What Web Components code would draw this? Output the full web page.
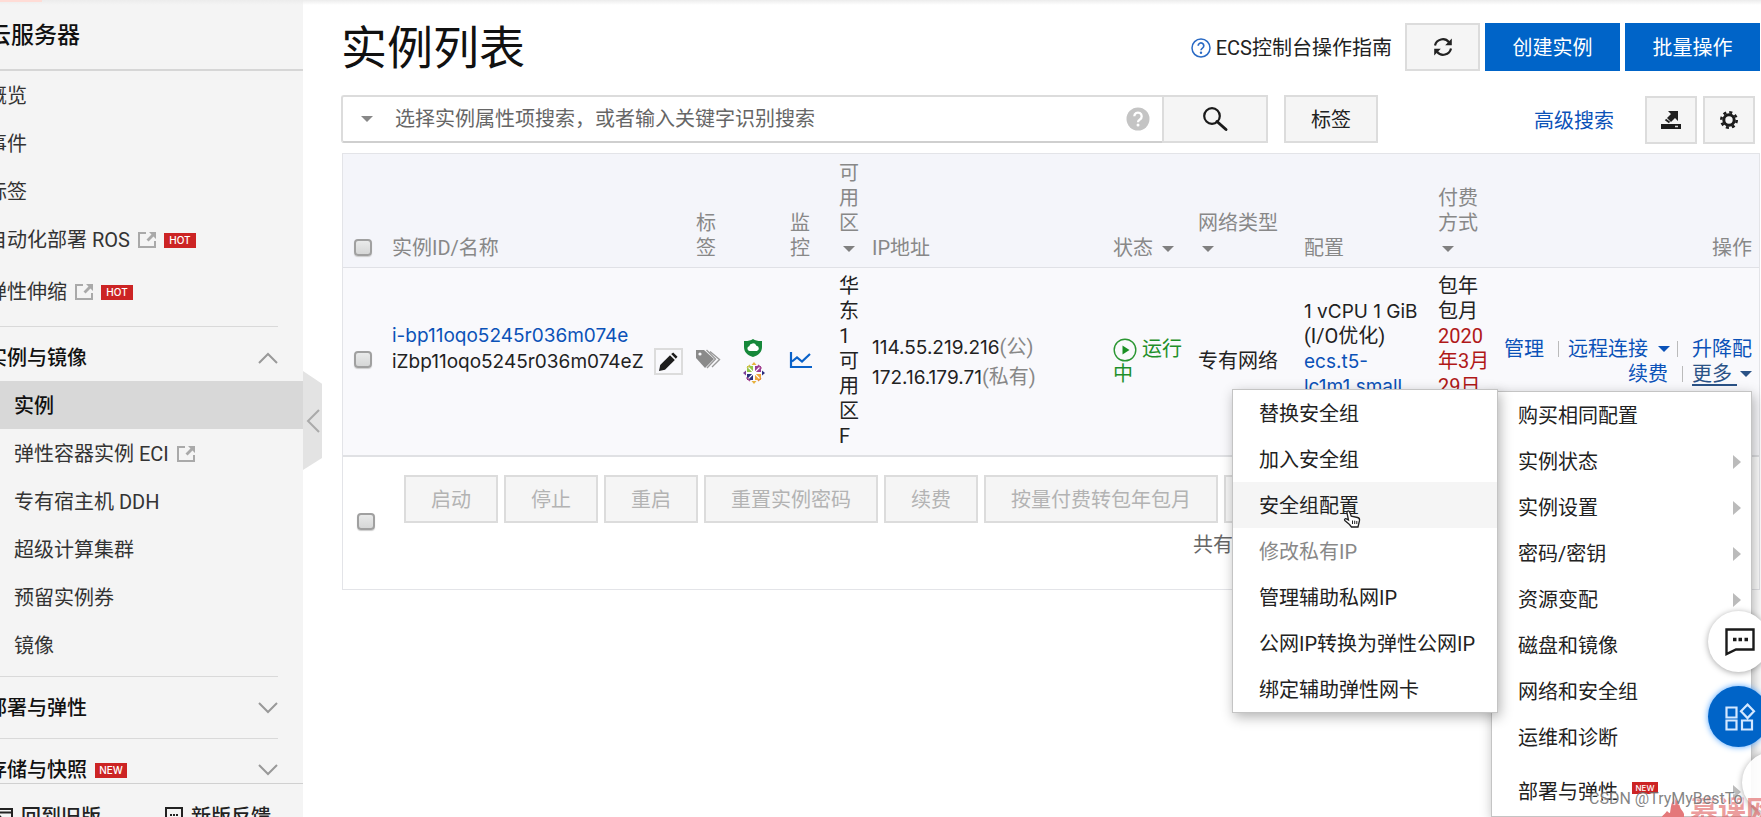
<!DOCTYPE html>
<html lang="zh-CN">
<head>
<meta charset="utf-8">
<title>实例列表</title>
<style>
  html, body { margin: 0; height: 100%; overflow: hidden; background: #fff; }
  body { font: 20px/25px Roboto, "Noto Sans CJK SC", sans-serif; color: #222; }
</style>
</head>
<body>
<ecs-app></ecs-app>

<script>
const define = (name, html, setup) => {
  const tpl = document.createElement('template');
  tpl.innerHTML = html;
  customElements.define(name, class extends HTMLElement {
    constructor() {
      super();
      this.attachShadow({ mode: 'open' }).append(tpl.content.cloneNode(true));
    }
    connectedCallback() { if (setup) setup(this, this.shadowRoot); }
  });
};

/* name: [width, height, markup] */
const ICONS = {
  external: [18, 16, '<path d="M8 1H1v14h16V9" fill="none" stroke="#a9a9a9" stroke-width="2"/><path d="M11 0h7v7l-2.500-2.500-5 5-2-2 5-5z" fill="#a9a9a9"/>'],
  up: [20, 12, '<path d="M1 11 10 2l9 9" fill="none" stroke="#999" stroke-width="2"/>'],
  down: [20, 12, '<path d="M1 1l9 9 9-9" fill="none" stroke="#999" stroke-width="2"/>'],
  left: [14, 24, '<path d="M13 1 2 12l11 11" fill="none" stroke="#aaa" stroke-width="2"/>'],
  caret: [12, 6, '<path d="M0 0h12L6 6z" fill="currentColor"/>'],
  right: [8, 14, '<path d="M0 0l8 7-8 7z" fill="#bbb"/>'],
  help: [20, 20, '<circle cx="10" cy="10" r="9" fill="none" stroke="#2a6ac4" stroke-width="1.500"/><path d="M7.200 7.800a2.800 2.800 0 1 1 4.300 2.300c-1 .7-1.500 1.100-1.500 2.200" fill="none" stroke="#2a6ac4" stroke-width="1.700"/><circle cx="10" cy="14.700" r="1.200" fill="#2a6ac4"/>'],
  helpFill: [24, 24, '<circle cx="12" cy="12" r="11.500" fill="#c4c4c4"/><path d="M8.300 9.300a3.700 3.700 0 1 1 5.600 3.200c-1.300.8-1.900 1.300-1.900 2.700" fill="none" stroke="#fff" stroke-width="2.300"/><circle cx="12" cy="18" r="1.500" fill="#fff"/>'],
  refresh: [20, 20, '<path d="M2 8.500A8 8 0 0 1 16 5.200M18 11.500A8 8 0 0 1 4 14.800" fill="none" stroke="#222" stroke-width="2.200"/><path d="M18.800 1.500v6.700h-6.600zM1.200 18.500v-6.700h6.600z" fill="#222"/>'],
  search: [26, 24, '<circle cx="10" cy="9" r="7.800" fill="none" stroke="#1a1a1a" stroke-width="2.200"/><path d="M15 14.500l9 8" stroke="#1a1a1a" stroke-width="3" stroke-linecap="round"/>'],
  export: [20, 20, '<path d="M0 14h20v5H0z" fill="#1c1c1c"/><path d="M14 16.500h3" stroke="#ddd" stroke-width="1.500"/><path d="M7 1h10v10l-3-3-4 4-4-4 4-4z" fill="#222"/><path d="M4.500 9.500l4 3" stroke="#222" stroke-width="2"/>'],
  gear: [18, 18, '<circle cx="9" cy="9" r="5.200" fill="none" stroke="#1c1c1c" stroke-width="3"/><circle cx="9" cy="9" r="7.700" fill="none" stroke="#1c1c1c" stroke-width="2.600" stroke-dasharray="3.050 3"/>'],
  pencil: [20, 20, '<path d="M1 19l1.200-6L12 3.200l4.800 4.800L7 17.800z" fill="#1d1d1d"/><path d="M13.200 2l2-1.500 4.300 4.300-1.700 2z" fill="#1d1d1d"/>'],
  tags: [26, 20, '<path d="M0 1h8l10 9-9 9-9-10z" fill="#8a8a8a"/><circle cx="4" cy="5" r="1.600" fill="#f9f9fc"/><path d="M10.500 1l9 9-8.500 9M14 2.500l9.500 8-7.500 7.500" fill="none" stroke="#999" stroke-width="1.400"/>'],
  shield: [20, 18, '<path d="M10 0c2.500 1.600 5.500 2.200 9 2v6c0 5-3.500 8.500-9 10-5.500-1.500-9-5-9-10V2c3.500.2 6.500-.4 9-2z" fill="#16883a"/><path d="M6.500 12a2.400 2.400 0 0 1-.3-4.700 3.800 3.800 0 0 1 7.200-.6 2.700 2.700 0 0 1 .4 5.300z" fill="#fff"/>'],
  flower: [22, 22, '<path d="M4 4h6v6H4z" fill="#8fc54a"/><path d="M12 4h6v6h-6z" fill="#9a3c96"/><path d="M4 12h6v6H4z" fill="#2b2e7d"/><path d="M12 12h6v6h-6z" fill="#f0a63c"/><path d="M11 0l2.500 3h-5zM11 22l2.500-3h-5z" fill="#e8b23f"/><path d="M0 11l3-2.500v5z" fill="#7b3f98"/><path d="M22 11l-3-2.500v5z" fill="#2b2e7d"/><path d="M4 6l3-3" stroke="#d9c04a" stroke-width="1.500"/><path d="M15 3l3.500 3.500M3.500 15.500L7 19" stroke="#a8458f" stroke-width="1.500"/><path d="M15 19l3-3" stroke="#e0883f" stroke-width="1.500"/><path d="M5.500 5.500l11 11M16.500 5.500l-11 11M11 3v16M3 11h16" stroke="#fff" stroke-width="1.100"/>'],
  chart: [22, 16, '<path d="M1 0v15h21" fill="none" stroke="#0a62c9" stroke-width="2.200"/><path d="M2 9.500l5-4 5 4 8-7.500" fill="none" stroke="#0a62c9" stroke-width="2.200"/>'],
  play: [24, 24, '<circle cx="12" cy="12" r="10.800" fill="none" stroke="#2a9632" stroke-width="1.400"/><path d="M9.500 7.500l7 4.500-7 4.500z" fill="#1a8f24"/>'],
  chat: [30, 28, '<path d="M1.500 1.500h27v20H11l-9.500 4.500z" fill="none" stroke="#1a1a1a" stroke-width="2.400"/><path d="M8 11.500h3.500M13.500 11.500H17M19.500 11.500H23" stroke="#1a1a1a" stroke-width="3.600"/>'],
  apps: [30, 28, '<g fill="none" stroke="#d4e8ff" stroke-width="2.200"><path d="M1.500 4.500h10v10h-10zM1.500 17.500h10v9h-10zM17 17.500h10v9H17zM22.500 1.500l6.500 6.800-6.500 6.800L16 8.300z"/></g>'],
  back: [20, 18, '<path d="M1 1h18v16H1z" fill="none" stroke="#222" stroke-width="2"/><path d="M1 4.500h18M5 11h9M8 8l-3.500 3L8 14" fill="none" stroke="#222" stroke-width="1.800"/>'],
  feedback: [18, 20, '<path d="M1 1h16v14H6l-5 4z" fill="none" stroke="#222" stroke-width="2"/><path d="M5 8h2M8 8h2M11 8h2" stroke="#222" stroke-width="2"/>'],
  hand: [18, 18, '<path d="M4.500 1.200c1-.6 1.800 0 2.200 1l1.600 4 6.200 1.300c1.800.5 2.300 1.500 2 3l-.8 3.500-.7 3H8.500l-2-2.500-4.700-4c-.8-1 .2-2.300 1.600-1.600L5.500 10 4 3c-.2-.8 0-1.400.5-1.800z" fill="#fff" stroke="#222" stroke-width="1.300"/><path d="M9.500 10.500v3.500M11.700 10.700v3.300M13.800 11v3" stroke="#222"/>'],
  flame: [24, 28, '<path d="M13 0c1 6 6 7 7 13 1 3 3 4 4 7v8H0c0-5 4-7 7-11 2 2 3 2 3 2 1-6 1-9 3-12z" fill="#e4787a"/>']
};
define('ui-icon', `
<style>
  :host { display: inline-flex; flex: none; }
  svg { display: block; overflow: visible; }
</style>
<svg aria-hidden="true"></svg>`, (host, root) => {
  const [w, h, body] = ICONS[host.getAttribute('name')];
  const svg = root.querySelector('svg');
  svg.setAttribute('width', w);
  svg.setAttribute('height', h);
  svg.setAttribute('viewBox', `0 0 ${w} ${h}`);
  svg.innerHTML = body;
});

define('ui-badge', `
<style>
  :host { display: inline-flex; align-items: center; justify-content: center; flex: none;
    width: 32px; height: 15px; background: #cc2424; color: #fff; font: 500 10px/15px Inter, sans-serif; }
  :host([small]) { width: 26px; height: 12px; font-size: 8px; line-height: 12px; align-self: flex-start; margin-top: 12px; }
</style><slot></slot>`);

define('ui-button', `
<style>
  :host { display: inline-flex; flex: none; }
  button { height: 48px; padding: 2px 25px 0; box-sizing: border-box; border: 2px solid #dcdcdc; background: #f5f5f5;
    color: #222; font: inherit; display: inline-flex; align-items: center; justify-content: center; white-space: nowrap; }
  button:disabled { color: #b3b3b3; }
  :host([kind=primary]) button { background: #0064c8; border-color: #0064c8; color: #fff; width: 135px; }
  :host([size=wide]) button { width: 106px; padding: 0; }
  :host([size=refresh]) button { width: 75px; padding: 0; }
  :host([size=square]) button { width: 52px; padding: 0; }
  :host([size=tiny]) button { width: 29px; height: 27px; padding: 0; background: none; }
</style>
<button type="button"><slot></slot></button>`, (host, root) => {
  const b = root.querySelector('button');
  b.disabled = host.hasAttribute('disabled');
  if (host.hasAttribute('label')) b.setAttribute('aria-label', host.getAttribute('label'));
});

define('ui-check', `
<style>
  :host { display: inline-flex; }
  input { appearance: none; margin: 0; width: 18px; height: 17px; border: 2px solid #a0a0a0; border-radius: 4px;
    background: linear-gradient(#e9eaea, #d6d7d7); box-shadow: 0 1px 1px #ccc; }
</style>
<input type="checkbox">`, (host, root) =>
  root.querySelector('input').setAttribute('aria-label', host.getAttribute('label')));

/* ---- sidebar ---- */
define('side-item', `
<style>
  :host { display: block; }
  a { display: flex; align-items: center; gap: 8px; height: 48px; padding-top: 2px; box-sizing: border-box;
    color: #333; text-decoration: none; white-space: nowrap; }
  :host([sub]) a { padding-left: 27px; }
  :host([current]) a { background: #d8d8d8; color: #111; font-weight: 500; }
</style>
<a href="#"><slot></slot></a>`);

define('side-group', `
<style>
  :host { display: block; }
  .rule { height: 1px; background: #d9d9d9; margin: 7px 25px 6px 0; }
  button { display: flex; align-items: center; gap: 8px; width: 100%; height: 48px; padding: 2px 25px 0 0; border: 0;
    background: none; font: inherit; font-weight: 500; color: #111; white-space: nowrap; }
  ui-icon { margin-left: auto; }
  :host([open]) .down, :host(:not([open])) .up { display: none; }
</style>
<div class="rule"></div>
<button type="button"><slot name="title"></slot><ui-icon class="up" name="up"></ui-icon><ui-icon class="down" name="down"></ui-icon></button>
<slot></slot>`);

define('ecs-sidebar', `
<style>
  :host { position: relative; flex: none; width: 303px; height: 100vh; display: block; z-index: 1; }
  .panel { height: 100%; display: flex; flex-direction: column; background: #f4f4f4; overflow: hidden; }
  h2 { flex: none; margin: 0; box-sizing: border-box; height: 71px; border-bottom: 2px solid #d6d6d6;
    font-size: 23px; font-weight: 500; line-height: 72px; color: #111; }
  h2 span { margin-left: -12px; }
  nav { flex: 1; min-height: 0; overflow: hidden; margin-left: -13px; }
  .last { margin: 4px 0 11px; }
  footer { flex: none; height: 33px; overflow: hidden; border-top: 1px solid #d0d0d0; display: flex; margin-left: -7px; }
  footer a { display: flex; align-items: center; gap: 8px; height: 28px; padding-top: 19px; flex: none; width: 172px;
    color: #222; text-decoration: none; font-weight: 500; white-space: nowrap; }
  .fold { position: absolute; left: 100%; top: 371px; width: 19px; height: 99px; padding: 0; border: 0; background: #e3e3e3;
    clip-path: polygon(0 0, 100% 13%, 100% 88%, 0 100%); display: flex; align-items: center; justify-content: center; }
</style>
<div class="panel">
  <h2><span>云服务器</span></h2>
  <nav>
    <side-item>概览</side-item>
    <side-item>事件</side-item>
    <side-item>标签</side-item>
    <side-item>自动化部署 ROS<ui-icon name="external"></ui-icon><ui-badge>HOT</ui-badge></side-item>
    <side-item class="last">弹性伸缩<ui-icon name="external"></ui-icon><ui-badge>HOT</ui-badge></side-item>
    <side-group open>
      <span slot="title">实例与镜像</span>
      <side-item sub current>实例</side-item>
      <side-item sub>弹性容器实例 ECI<ui-icon name="external"></ui-icon></side-item>
      <side-item sub>专有宿主机 DDH</side-item>
      <side-item sub>超级计算集群</side-item>
      <side-item sub>预留实例券</side-item>
      <side-item sub>镜像</side-item>
    </side-group>
    <side-group><span slot="title">部署与弹性</span></side-group>
    <side-group><span slot="title">存储与快照</span><ui-badge slot="title">NEW</ui-badge></side-group>
  </nav>
  <footer>
    <a href="#"><ui-icon name="back"></ui-icon>回到旧版</a>
    <a href="#"><ui-icon name="feedback"></ui-icon>新版反馈</a>
  </footer>
</div>
<button class="fold" type="button" aria-label="收起"><ui-icon name="left"></ui-icon></button>`);

/* ---- page header and search ---- */
define('page-header', `
<style>
  :host { display: flex; align-items: center; gap: 5px; height: 48px; }
  h1 { margin: 0 auto 0 0; padding-top: 2px; font-size: 46px; line-height: 48px; font-weight: 400; color: #111; }
  a { display: flex; align-items: center; gap: 5px; padding-top: 2px; color: #222; text-decoration: none; margin-right: 8px; white-space: nowrap; }
</style>
<h1>实例列表</h1>
<a href="#"><ui-icon name="help"></ui-icon>ECS控制台操作指南</a>
<ui-button size="refresh" label="刷新"><ui-icon name="refresh"></ui-icon></ui-button>
<ui-button kind="primary">创建实例</ui-button>
<ui-button kind="primary">批量操作</ui-button>`);

define('search-bar', `
<style>
  :host { display: flex; align-items: center; height: 48px; padding-right: 5px; }
  .box { flex: 0 1 821px; min-width: 0; box-sizing: border-box; height: 48px; display: flex; align-items: center; gap: 22px; padding: 0 12px 0 18px;
    border: 2px solid #dcdcdc; border-bottom-color: #cfcfcf; border-right: 0; border-radius: 3px 0 0 3px; color: #888; }
  input { flex: 1; min-width: 0; border: 0; padding: 0; background: none; outline: 0; font: inherit; color: #222; }
  input::placeholder { color: #666; opacity: 1; }
  .tag { margin-left: 16px; }
  a { margin: 0 31px 0 auto; padding-top: 4px; color: #0b52b8; text-decoration: none; white-space: nowrap; }
  .tools { display: flex; gap: 6px; padding-top: 2px; }
</style>
<div class="box">
  <ui-icon name="caret"></ui-icon>
  <input type="text" aria-label="搜索实例" placeholder="选择实例属性项搜索，或者输入关键字识别搜索">
  <ui-icon name="helpFill"></ui-icon>
</div>
<ui-button size="wide" label="搜索"><ui-icon name="search"></ui-icon></ui-button>
<ui-button class="tag">标签</ui-button>
<a href="#">高级搜索</a>
<div class="tools">
  <ui-button size="square" label="导出"><ui-icon name="export"></ui-icon></ui-button>
  <ui-button size="square" label="设置"><ui-icon name="gear"></ui-icon></ui-button>
</div>`);

/* ---- instance table ---- */
define('instance-table', `
<style>
  :host { display: block; border: 1px solid #e3e4e8; }
  table { width: 100%; border-collapse: collapse; table-layout: fixed; }
  th, td { padding: 7px 0 6px; text-align: left; font-weight: 400; overflow-wrap: anywhere; }
  th { vertical-align: bottom; color: #888; background: #f4f5fa; border-bottom: 1px solid #e0e1e6; }
  th ui-icon { margin: 0 4px; vertical-align: 3px; color: #808080; }
  td { padding-top: 6px; vertical-align: middle; background: #f9f9fc; border-bottom: 2px solid #e0e1e4; }
  .pick { padding-left: 11px; }
  th ui-check { display: flex; margin-bottom: 5px; }
  a { color: #0b52b8; text-decoration: none; }
  .latin { font: 19px/25px Inter, "Noto Sans CJK SC", sans-serif; }
  .id { padding-bottom: 31px; }
  .name { display: flex; align-items: center; gap: 10px; }
  .icons { display: flex; flex-direction: column; gap: 5px; align-items: flex-start; }
  .ip { line-height: 30px; color: #888; }
  .ip span { color: #222; }
  .run { color: #1f8f2a; }
  .run ui-icon { vertical-align: -6px; margin-right: 5px; }
  .top { vertical-align: top; }
  .spec { padding-top: 31px; }
  .due { color: #b01818; }
  .ops { text-align: right; padding-right: 7px; }
  .ops div { display: flex; justify-content: flex-end; align-items: center; }
  .ops a { white-space: nowrap; display: flex; align-items: center; gap: 10px; }
  .ops i { width: 1px; height: 16px; background: #bbb; margin: 0 9px 0 14px; }
  .ops i.near { margin: 0 14px 0 7px; }
  .ops a.more { gap: 3px; color: #2a5286; }
  .more span { text-decoration: underline; text-underline-offset: 3px; }
  footer { display: grid; grid-template-columns: 47px 1fr; padding: 18px 0 0 14px; height: 114px; }
  footer ui-check { padding-top: 38px; align-self: start; }
  .bulk { display: flex; gap: 6px; overflow: hidden; }
  .total { margin: 10px 0 0 789px; color: #666; }
</style>
<table>
  <colgroup>
    <col style="width:49px"><col style="width:304px"><col style="width:47px"><col style="width:47px"><col style="width:49px">
    <col style="width:33px"><col style="width:241px"><col style="width:85px"><col style="width:106px"><col style="width:134px">
    <col style="width:53px"><col>
  </colgroup>
  <thead><tr>
    <th class="pick"><ui-check label="全选"></ui-check></th>
    <th>实例ID/名称</th>
    <th><div style="width:20px">标签</div></th>
    <th></th>
    <th><div style="width:20px">监控</div></th>
    <th><div style="width:20px">可用区<ui-icon name="caret"></ui-icon></div></th>
    <th>IP地址</th>
    <th>状态 <ui-icon name="caret"></ui-icon></th>
    <th><div style="width:81px">网络类型 <ui-icon name="caret"></ui-icon></div></th>
    <th>配置</th>
    <th>付费方式 <ui-icon name="caret"></ui-icon></th>
    <th class="ops">操作</th>
  </tr></thead>
  <tbody><tr>
    <td class="pick"><ui-check label="选择实例"></ui-check></td>
    <td class="latin id"><a href="#">i-bp11oqo5245r036m074e</a>
      <div class="name">iZbp11oqo5245r036m074eZ <ui-button size="tiny" label="编辑名称"><ui-icon name="pencil"></ui-icon></ui-button></div></td>
    <td><ui-icon name="tags"></ui-icon></td>
    <td><div class="icons"><ui-icon name="shield"></ui-icon><ui-icon name="flower"></ui-icon></div></td>
    <td><ui-icon name="chart"></ui-icon></td>
    <td><div style="width:20px">华东1可用区F</div></td>
    <td class="ip"><span class="latin">114.55.219.216</span>(公)<br><span class="latin">172.16.179.71</span>(私有)</td>
    <td><div class="run" style="width:72px"><ui-icon name="play"></ui-icon>运行中</div></td>
    <td>专有网络</td>
    <td class="top spec"><span class="latin">1 vCPU 1 GiB</span><br>(I/O优化)<br><a href="#" class="latin">ecs.t5-<br>lc1m1.small</a></td>
    <td class="top">包年包月<span class="due">2020年3月29日</span></td>
    <td class="ops">
      <div><a href="#">管理</a><i></i><a href="#">远程连接<ui-icon name="caret"></ui-icon></a><i class="near"></i><a href="#">升降配</a></div>
      <div><a href="#">续费</a><i></i><a href="#" class="more"><span>更多&nbsp;</span><ui-icon name="caret"></ui-icon></a></div>
    </td>
  </tr></tbody>
</table>
<footer>
  <ui-check label="全选本页"></ui-check>
  <div>
    <div class="bulk">
      <ui-button disabled>启动</ui-button><ui-button disabled>停止</ui-button><ui-button disabled>重启</ui-button>
      <ui-button disabled>重置实例密码</ui-button><ui-button disabled>续费</ui-button>
      <ui-button disabled>按量付费转包年包月</ui-button><ui-button disabled label="更多操作"></ui-button>
    </div>
    <div class="total">共有</div>
  </div>
</footer>`);

/* ---- menus ---- */
define('drop-menu', `
<style>
  :host { position: absolute; box-sizing: border-box; background: #fff; border: 1px solid #c4c4c4; box-shadow: 2px 4px 12px rgba(0,0,0,.3); }
  div { display: flex; flex-direction: column; }
</style>
<div role="menu"><slot></slot></div>`);

define('menu-item', `
<style>
  :host { display: block; }
  button { width: 100%; height: 46px; border: 0; padding: 2px 10px 0 26px; background: none; font: inherit; color: #222;
    display: flex; align-items: center; gap: 14px; white-space: nowrap; }
  button:disabled { color: #888; }
  :host([active]) button { background: #f5f5f5; }
  .arrow { display: none; margin-left: auto; }
  :host([more]) .arrow { display: inline-flex; }
</style>
<button type="button" role="menuitem"><slot></slot><ui-icon class="arrow" name="right"></ui-icon></button>`,
(host, root) => { root.querySelector('button').disabled = host.hasAttribute('disabled'); });

define('float-tools', `
<style>
  :host { position: absolute; right: -8px; top: 611px; display: flex; flex-direction: column; gap: 14px; align-items: flex-end; }
  button { width: 61px; height: 61px; border: 0; border-radius: 50%; padding: 0 0 0 2px; background: #fff; box-shadow: 0 1px 6px rgba(0,0,0,.35);
    display: flex; align-items: center; justify-content: center; }
  .apps { background: #0064c8; box-shadow: 0 0 6px #4ea3ff; }
  .half { margin: -9px -34px 0 0; opacity: .92; }
</style>
<button type="button" aria-label="咨询"><ui-icon name="chat"></ui-icon></button>
<button type="button" class="apps" aria-label="应用"><ui-icon name="apps"></ui-icon></button>
<button type="button" class="half" aria-label="更多"></button>`);

define('page-marks', `
<style>
  :host { position: absolute; right: 0; bottom: 0; width: 180px; height: 31px; overflow: hidden; pointer-events: none; }
  .site { position: absolute; left: 79px; top: 8px; display: flex; align-items: flex-start; gap: 6px; white-space: nowrap;
    font-weight: 700; font-size: 28px; line-height: 35px; color: rgba(222,90,90,.62); }
  .user { position: absolute; left: 8px; top: 0; font-size: 16px; line-height: 25px; color: rgba(110,110,110,.85);
    text-shadow: 1px 1px 1px #fff; white-space: nowrap; }
</style>
<div class="site"><ui-icon name="flame"></ui-icon>慕课网</div>
<div class="user">CSDN @TryMyBestTo</div>`);

define('ecs-app', `
<style>
  :host { position: relative; display: flex; height: 100vh; overflow: hidden; }
  .shade { position: absolute; inset: 0 0 auto 0; height: 5px; z-index: 2;
    background: linear-gradient(90deg, #ffdcd6 42px, transparent 42px) 0 0 / 100% 2px no-repeat, linear-gradient(#ececec, transparent); }
  main { flex: 1; min-width: 0; padding: 23px 1px 0 38px; display: flex; flex-direction: column; }
  search-bar { margin-top: 24px; }
  instance-table { margin: 10px 0 0 1px; }
  .main-menu { right: 9px; top: 391px; width: 261px; padding-bottom: 2px; }
  .sub-menu { right: 263px; top: 389px; width: 266px; }
  .last { margin-top: 8px; }
  .hand { position: absolute; left: 110px; top: 120px; }
</style>
<div class="shade"></div>
<ecs-sidebar></ecs-sidebar>
<main>
  <page-header></page-header>
  <search-bar></search-bar>
  <instance-table></instance-table>
</main>
<drop-menu class="main-menu">
  <menu-item>购买相同配置</menu-item>
  <menu-item more>实例状态</menu-item>
  <menu-item more>实例设置</menu-item>
  <menu-item more>密码/密钥</menu-item>
  <menu-item more>资源变配</menu-item>
  <menu-item>磁盘和镜像</menu-item>
  <menu-item>网络和安全组</menu-item>
  <menu-item>运维和诊断</menu-item>
  <menu-item more class="last">部署与弹性<ui-badge small>NEW</ui-badge></menu-item>
</drop-menu>
<drop-menu class="sub-menu">
  <menu-item>替换安全组</menu-item>
  <menu-item>加入安全组</menu-item>
  <menu-item active>安全组配置</menu-item>
  <menu-item disabled>修改私有IP</menu-item>
  <menu-item>管理辅助私网IP</menu-item>
  <menu-item>公网IP转换为弹性公网IP</menu-item>
  <menu-item>绑定辅助弹性网卡</menu-item>
  <ui-icon class="hand" name="hand"></ui-icon>
</drop-menu>
<float-tools></float-tools>
<page-marks></page-marks>`);
</script>
</body>
</html>
